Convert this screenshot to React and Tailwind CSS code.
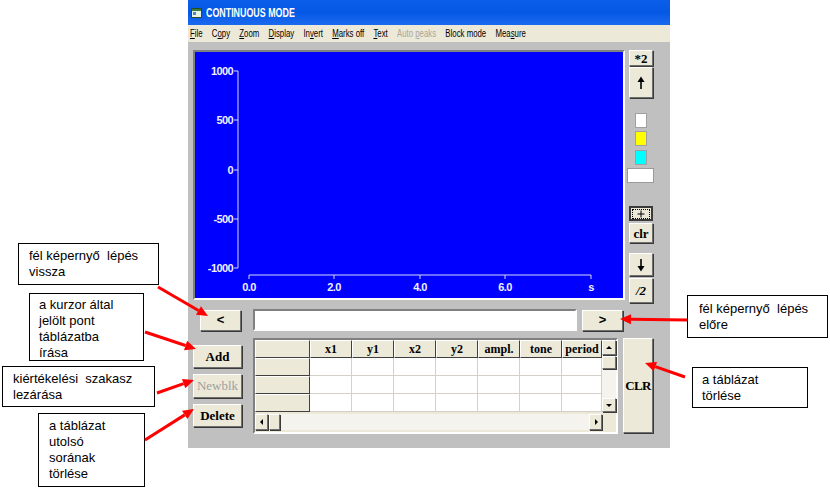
import React from "react";

const uiFont = "font-['Liberation_Sans',Arial,sans-serif]";
const serifFont = "font-['Liberation_Serif','Times_New_Roman',serif]";
const noteFont = "font-['Liberation_Sans',Arial,sans-serif]";

const raised = "bg-[#ece9d8] border border-t-white border-l-white border-b-[#6f6f6f] border-r-[#6f6f6f] shadow-[1px_1px_0_#3a3a3a]";
const sunken = "border-2 border-t-[#808080] border-l-[#808080] border-b-white border-r-white";

const menuItems = [
  ["File", 0],
  ["Copy", 1],
  ["Zoom", 0],
  ["Display", 0],
  ["Invert", 2],
  ["Marks off", 0],
  ["Text", 0],
  ["Auto peaks", 5, true],
  ["Block mode", -1],
  ["Measure", 3]
];

const columns = ["x1", "y1", "x2", "y2", "ampl.", "tone", "period"];

const notes = [
  { left: "left-[18px]", top: "top-[243px]", size: "w-[141px] h-[42px]", pad: "pl-[10px] pt-[4px]", text: "fél képernyő  lépés\nvissza" },
  { left: "left-[29px]", top: "top-[293px]", size: "w-[115px] h-[68px]", pad: "pl-[9px] pt-[3px]", text: "a kurzor által\njelölt pont\ntáblázatba\nírása" },
  { left: "left-[2px]", top: "top-[366px]", size: "w-[153px] h-[41px]", pad: "pl-[10px] pt-[4px]", text: "kiértékelési  szakasz\nlezárása" },
  { left: "left-[38px]", top: "top-[413px]", size: "w-[107px] h-[74px]", pad: "pl-[10px] pt-[4px]", text: "a táblázat\nutolsó\nsorának\ntörlése" },
  { left: "left-[687px]", top: "top-[295px]", size: "w-[141px] h-[43px]", pad: "pl-[11px] pt-[5px]", text: "fél képernyő  lépés\nelőre" },
  { left: "left-[692px]", top: "top-[367px]", size: "w-[116px] h-[41px]", pad: "pl-[9px] pt-[4px]", text: "a táblázat\ntörlése" }
];

const arrows = [
  [158, 287, 208, 316],
  [145, 332, 196, 349],
  [157, 393, 194, 380],
  [145, 440, 194, 409],
  [687, 320, 620, 319],
  [685, 377, 645, 363]
];

const Arrow = ({ from, to }) => {
  const [x1, y1] = from;
  const [x2, y2] = to;
  const dx = x2 - x1;
  const dy = y2 - y1;
  const len = Math.hypot(dx, dy);
  const ux = dx / len;
  const uy = dy / len;
  const bx = x2 - ux * 11;
  const by = y2 - uy * 11;
  const head = [
    [x2, y2],
    [bx - uy * 5, by + ux * 5],
    [bx + uy * 5, by - ux * 5]
  ]
    .map((p) => p.join(","))
    .join(" ");

  return (
    <g>
      <line x1={x1} y1={y1} x2={bx} y2={by} stroke="#ff0000" strokeWidth="3" />
      <polygon points={head} fill="#ff0000" />
    </g>
  );
};

const Tri = ({ dir }) => {
  const pts = {
    up: "1,5 4,2 7,5",
    down: "1,3 4,6 7,3",
    left: "5,1 2,4 5,7",
    right: "3,1 6,4 3,7"
  }[dir];
  return (
    <svg width="8" height="8" viewBox="0 0 8 8">
      <polygon points={pts} fill="#000" />
    </svg>
  );
};

const UpDown = ({ down }) => (
  <svg width="10" height="14" viewBox="0 0 10 14" className={down ? "rotate-180" : ""}>
    <line x1="5" y1="13" x2="5" y2="4" stroke="#000" strokeWidth="1.6" />
    <polygon points="1.5,6 5,0.5 8.5,6" fill="#000" />
  </svg>
);

const Plot = () => {
  const yTicks = [
    [19, "1000"],
    [68, "500"],
    [118, "0"],
    [167, "-500"],
    [216, "-1000"]
  ];
  const xTicks = [
    [54, "0.0"],
    [139, "2.0"],
    [225, "4.0"],
    [310, "6.0"],
    [396, "s"]
  ];
  const labelFont = "'Liberation Sans',Arial,sans-serif";

  return (
    <svg width="428" height="246" viewBox="0 0 428 246" className="block">
      <rect width="428" height="246" fill="#0000ff" />
      <line x1="43" y1="19" x2="43" y2="216" stroke="#d8d8ff" strokeWidth="1" />
      {yTicks.map(([y, label]) => (
        <g key={label}>
          <line x1="39" y1={y} x2="43" y2={y} stroke="#d8d8ff" strokeWidth="1" />
          <text x="38" y={y + 4} textAnchor="end" fill="#f0f0ff" fontSize="11" fontWeight="bold" letterSpacing="-0.6" fontFamily={labelFont}>
            {label}
          </text>
        </g>
      ))}
      <line x1="54" y1="223" x2="396" y2="223" stroke="#d8d8ff" strokeWidth="1" />
      {xTicks.map(([x, label]) => (
        <g key={label}>
          <line x1={x} y1="223" x2={x} y2="227" stroke="#d8d8ff" strokeWidth="1" />
          <text x={x} y="239" textAnchor="middle" fill="#f0f0ff" fontSize="11" fontWeight="bold" letterSpacing="-0.6" fontFamily={labelFont}>
            {label}
          </text>
        </g>
      ))}
    </svg>
  );
};

const SideButton = ({ children, className = "" }) => (
  <div className={`${raised} ${serifFont} ml-[2px] w-[24px] flex items-center justify-center text-[13px] font-bold text-black leading-none ${className}`}>
    {children}
  </div>
);

const App = () => {
  return (
    <div className="relative w-[830px] h-[489px] overflow-hidden bg-white">
      <div className="ml-[188px] w-[482px] flex flex-col">
        {/* title bar */}
        <div className="h-[25px] flex items-center gap-[4px] pl-[3px] bg-gradient-to-b from-[#0a5ee8] via-[#0558e4] to-[#1a6af0]">
          <svg width="11" height="10" viewBox="0 0 11 10">
            <rect x="0.5" y="0.5" width="10" height="9" fill="#e8f4e0" stroke="#2c4a2c" />
            <rect x="1" y="1" width="9" height="2" fill="#3a7a3a" />
            <rect x="2" y="4" width="3" height="3" fill="#4a8ad0" />
          </svg>
          <span className={`${uiFont} inline-block origin-left scale-x-[0.74] text-[12px] font-bold text-white`}>CONTINUOUS MODE</span>
        </div>

        {/* menu bar */}
        <div className="h-[17px] bg-[#ece9d8] flex items-center pl-[2px]">
          <div className={`${uiFont} origin-left scale-x-[0.71] flex items-center gap-[13px] text-[11px] text-black whitespace-nowrap`}>
            {menuItems.map(([label, u, disabled]) => (
              <span key={label} className={disabled ? "text-[#a9a799]" : ""}>
                {label.split("").map((ch, i) => (
                  <span key={i} className={i === u ? "underline" : ""}>
                    {ch}
                  </span>
                ))}
              </span>
            ))}
          </div>
        </div>

        {/* body */}
        <div className="h-[406px] bg-[#c0c0c0] pt-[8px] flex flex-col">
          <div className="flex items-start">
            <div className={`ml-[5px] ${sunken}`}>
              <Plot />
            </div>
            <div className="ml-[2px] w-[27px] flex flex-col">
              <SideButton className="h-[16px] text-[12px]">*2</SideButton>
              <SideButton className="mt-[1px] h-[31px]">
                <UpDown />
              </SideButton>
              <div className="mt-[15px] ml-[8px] w-[12px] h-[15px] bg-white border border-[#a0a0a0]" />
              <div className="mt-[3px] ml-[8px] w-[12px] h-[15px] bg-[#ffff00] border border-[#a0a0a0]" />
              <div className="mt-[4px] ml-[8px] w-[12px] h-[15px] bg-[#00ffff] border border-[#a0a0a0]" />
              <div className="mt-[3px] w-[27px] h-[15px] bg-white border border-[#9a9a9a]" />
              <div className="mt-[23px] ml-[2px] w-[24px] h-[15px] bg-[#ece9d8] border-2 border-[#3a3a3a] flex items-center justify-center">
                <div className="w-[18px] h-[10px] border border-dotted border-black flex items-center justify-center">
                  <svg width="8" height="8" viewBox="0 0 8 8">
                    <path d="M4 0.5V7.5M0.5 4H7.5" stroke="#000" strokeWidth="1" />
                  </svg>
                </div>
              </div>
              <SideButton className="mt-[2px] h-[20px] text-[12px]">clr</SideButton>
              <SideButton className="mt-[10px] h-[23px]">
                <UpDown down />
              </SideButton>
              <SideButton className="mt-[2px] h-[25px] text-[12px] italic">/2</SideButton>
            </div>
          </div>

          {/* navigation row */}
          <div className="mt-[6px] flex items-center">
            <div className={`${raised} ml-[12px] w-[41px] h-[21px] flex items-center justify-center ${noteFont} text-[13px] font-bold`}>&lt;</div>
            <div className={`ml-[12px] w-[324px] h-[22px] bg-white ${sunken}`} />
            <div className={`${raised} ml-[5px] w-[41px] h-[21px] flex items-center justify-center ${noteFont} text-[13px] font-bold`}>&gt;</div>
          </div>

          {/* table row */}
          <div className="mt-[7px] flex items-start">
            <div className={`ml-[5px] mt-[7px] w-[49px] flex flex-col gap-[6px] ${serifFont} text-[13px] font-bold`}>
              <div className={`${raised} h-[23px] flex items-center justify-center`}>Add</div>
              <div className={`${raised} h-[24px] flex items-center justify-center font-normal text-[#a0a0a0]`}>Newblk</div>
              <div className={`${raised} h-[23px] flex items-center justify-center`}>Delete</div>
            </div>

            <div className={`ml-[11px] w-[365px] h-[96px] bg-[#ece9d8] ${sunken} flex flex-col`}>
              <div className="flex">
                <div className={`grid grid-cols-[55px_repeat(6,42px)_40px] auto-rows-[18px] ${serifFont}`}>
                  <div className="bg-[#ece9d8] border border-t-white border-l-white border-b-[#404040] border-r-[#404040]" />
                  {columns.map((c) => (
                    <div key={c} className="bg-[#ece9d8] border border-t-white border-l-white border-b-[#404040] border-r-[#404040] flex items-center justify-center text-[12px] font-bold leading-none">
                      {c}
                    </div>
                  ))}
                  {[0, 1, 2].map((r) => (
                    <React.Fragment key={r}>
                      <div className="bg-[#ece9d8] border border-t-white border-l-white border-b-[#404040] border-r-[#404040]" />
                      {columns.map((c) => (
                        <div key={c} className="bg-white border-r border-b border-[#d4d0c8]" />
                      ))}
                    </React.Fragment>
                  ))}
                </div>
                <div className="w-[14px] h-[72px] bg-[#f4f3ee] flex flex-col justify-between">
                  <div className="flex flex-col">
                    <div className={`${raised} h-[15px] flex items-center justify-center`}>
                      <Tri dir="up" />
                    </div>
                    <div className={`${raised} mt-[1px] h-[13px]`} />
                  </div>
                  <div className={`${raised} h-[14px] flex items-center justify-center`}>
                    <Tri dir="down" />
                  </div>
                </div>
              </div>
              <div className="mt-[2px] flex">
                <div className="w-[347px] h-[16px] bg-[#f4f3ee] flex justify-between">
                  <div className="flex">
                    <div className={`${raised} w-[13px] flex items-center justify-center`}>
                      <Tri dir="left" />
                    </div>
                    <div className={`${raised} ml-[1px] w-[11px]`} />
                  </div>
                  <div className={`${raised} w-[13px] flex items-center justify-center`}>
                    <Tri dir="right" />
                  </div>
                </div>
              </div>
            </div>

            <div className={`${raised} ml-[5px] w-[30px] h-[95px] flex items-center justify-center ${serifFont} text-[13px] tracking-[-0.6px] font-bold`}>
              CLR
            </div>
          </div>
        </div>
      </div>

      {/* callouts */}
      {notes.map((n, i) => (
        <div
          key={i}
          className={`absolute ${n.left} ${n.top} ${n.size} ${n.pad} bg-white border border-black ${noteFont} text-[13px] leading-[16px] text-black whitespace-pre`}
        >
          {n.text}
        </div>
      ))}

      <svg className="absolute left-0 top-0 pointer-events-none" width="830" height="489" viewBox="0 0 830 489">
        {arrows.map(([x1, y1, x2, y2], i) => (
          <Arrow key={i} from={[x1, y1]} to={[x2, y2]} />
        ))}
      </svg>
    </div>
  );
};

export default App;
